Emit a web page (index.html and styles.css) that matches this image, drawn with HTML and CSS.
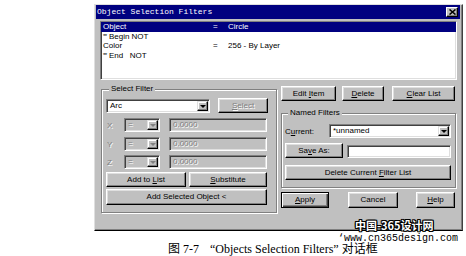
FILE: index.html
```html
<!DOCTYPE html>
<html lang="zh">
<head>
    <meta charset="UTF-8">
    <meta name="viewport" content="width=device-width, initial-scale=1.0">
    <title>Object Selection Filters</title>
    <link rel="stylesheet" href="styles.css">
</head>
<body>
    <div class="dialog">
        <div class="titlebar">
            <span class="title">Object Selection Filters</span>
            <span class="close-btn">
                <svg width="7" height="6" viewBox="0 0 7 6"><path d="M0.5 0.5 L6.5 5.5 M6.5 0.5 L0.5 5.5" stroke="#000" stroke-width="1.6"/></svg>
            </span>
        </div>

        <div class="dialog-body">
            <!-- current filter list -->
            <div class="filter-list">
                <div class="row selected"><span class="col-name">Object</span><span class="col-eq">=</span><span class="col-val">Circle</span></div>
                <div class="row"><span class="col-name"><span class="mark">**</span> Begin NOT</span></div>
                <div class="row"><span class="col-name">Color</span><span class="col-eq">=</span><span class="col-val">256 - By Layer</span></div>
                <div class="row"><span class="col-name"><span class="mark">**</span> End   NOT</span></div>
            </div>

            <div class="panels">
                <div class="group select-filter">
                    <span class="legend">Select Filter</span>
                    <div class="line first">
                        <div class="combo arc-combo"><span class="combo-text">Arc</span><span class="combo-arrow"></span></div>
                        <button class="btn select-btn" disabled><u>S</u>elect</button>
                    </div>
                    <div class="line coord">
                        <span class="axis">X</span>
                        <div class="combo small-combo disabled"><span class="combo-text">=</span><span class="combo-arrow"></span></div>
                        <div class="edit value-edit disabled">0.0000</div>
                    </div>
                    <div class="line coord">
                        <span class="axis">Y</span>
                        <div class="combo small-combo disabled"><span class="combo-text">=</span><span class="combo-arrow"></span></div>
                        <div class="edit value-edit disabled">0.0000</div>
                    </div>
                    <div class="line coord last">
                        <span class="axis">Z</span>
                        <div class="combo small-combo disabled"><span class="combo-text">=</span><span class="combo-arrow"></span></div>
                        <div class="edit value-edit disabled">0.0000</div>
                    </div>
                    <div class="line add-row">
                        <button class="btn add-btn">Add to <u>L</u>ist</button>
                        <button class="btn sub-btn"><u>S</u>ubstitute</button>
                    </div>
                    <button class="btn add-selected">Add Selected Object &lt;</button>
                </div>

                <div class="right-col">
                    <div class="line top-buttons">
                        <button class="btn edit-btn">Edit <u>I</u>tem</button>
                        <button class="btn delete-btn"><u>D</u>elete</button>
                        <button class="btn clear-btn"><u>C</u>lear List</button>
                    </div>

                    <div class="group named-filters">
                        <span class="legend">Named Filters</span>
                        <div class="line current-row">
                            <span class="field-label">C<u>u</u>rrent:</span>
                            <div class="combo current-combo"><span class="combo-text">*unnamed</span><span class="combo-arrow"></span></div>
                        </div>
                        <div class="line save-row">
                            <button class="btn save-btn">Sa<u>v</u>e As:</button>
                            <div class="edit save-edit"></div>
                        </div>
                        <button class="btn delete-list">Delete Current <u>F</u>ilter List</button>
                    </div>

                    <div class="line bottom-buttons">
                        <button class="btn default apply-btn"><u>A</u>pply</button>
                        <button class="btn cancel-btn">Cancel</button>
                        <button class="btn help-btn"><u>H</u>elp</button>
                    </div>
                </div>
            </div>
        </div>
    </div>

    <p class="caption"><span class="fig-no">图 7-7</span><span class="fig-title">“Objects Selection Filters” 对话框</span></p>

    <div class="watermark">
        <div class="wm-name">中国-365设计网</div>
        <div class="wm-url">‘www.cn365design.com</div>
    </div>
</body>
</html>
```

FILE: styles.css
```css
body {
    margin: 0;
    width: 466px;
    height: 256px;
    overflow: hidden;
    position: relative;
    background-color: #fff;
    font-family: "Liberation Sans", Arial, sans-serif;
    font-size: 8px;
    color: #000;
}
.dialog {
    box-sizing: border-box;
    width: 369px;
    height: 227px;
    margin: 4px 0 0 94px;
    padding: 0 2px 0 1px;
    background-color: #c0c0c0;
    border: 1px solid;
    border-color: #dfdfdf #404040 #000 #dfdfdf;
    box-shadow: inset -1px -1px 0 #808080;
}
.titlebar {
    display: flex;
    align-items: center;
    justify-content: space-between;
    height: 14px;
    padding: 0 2px 0 1px;
    background-color: #000080;
    color: #fff;
}
.title {
    font-family: "Liberation Mono", monospace;
    font-size: 8px;
    line-height: 14px;
}
.close-btn {
    box-sizing: border-box;
    display: flex;
    align-items: center;
    justify-content: center;
    width: 12px;
    height: 10px;
    background-color: #c0c0c0;
    border: 1px solid;
    border-color: #fff #000 #000 #fff;
    box-shadow: inset -1px -1px 0 #808080;
}
.dialog-body {
    padding: 2px 3px 0 4px;
}

/* list */
.filter-list {
    box-sizing: border-box;
    height: 59px;
    background-color: #fff;
    border: 1px solid;
    border-color: #808080 #fff #fff #808080;
    box-shadow: inset 1px 1px 0 #404040, inset -1px -1px 0 #dfdfdf;
}
.row {
    display: flex;
    height: 9.5px;
    line-height: 9.5px;
    padding-left: 2px;
    white-space: pre;
}
.row.selected {
    background-color: #000080;
    color: #fff;
}
.col-name {
    width: 110px;
}
.col-eq {
    width: 15px;
}
.mark {
    font-size: 6px;
    line-height: 6px;
    vertical-align: 1px;
    letter-spacing: -0.5px;
}

/* panels */
.panels {
    display: flex;
    align-items: flex-start;
    gap: 4px;
}
.group {
    box-sizing: border-box;
    border: 1px solid #808080;
    box-shadow: inset 1px 1px 0 #fff, 1px 1px 0 #fff;
}
.legend {
    display: table;
    margin: -6px 0 0 3px;
    padding: 0 2px;
    line-height: 10px;
    background-color: #c0c0c0;
}
.line {
    display: flex;
    align-items: flex-end;
}
.select-filter {
    width: 176px;
    margin: 9px 0 0 1px;
    padding: 0 4px 7px 4px;
}
.select-filter .first {
    margin-top: 4px;
    gap: 8px;
}
.coord {
    margin-top: 5px;
    align-items: center;
}
.coord.last {
    margin-top: 4px;
}
.axis {
    width: 18px;
    padding-left: 1px;
    box-sizing: border-box;
    color: #808080;
    text-shadow: 1px 1px 0 #fff;
}
.add-row {
    margin-top: 3px;
    gap: 3px;
}

/* controls */
.btn {
    box-sizing: border-box;
    height: 15px;
    padding: 0;
    font: inherit;
    line-height: 12px;
    color: #000;
    background-color: #c0c0c0;
    border: 1px solid;
    border-color: #fff #000 #000 #fff;
    box-shadow: inset -1px -1px 0 #808080, inset 1px 1px 0 #dfdfdf;
    text-align: center;
    white-space: nowrap;
}
.btn:disabled {
    color: #808080;
    text-shadow: 1px 1px 0 #fff;
}
.btn.default {
    border-color: #000;
    box-shadow: inset 1px 1px 0 #fff, inset -1px -1px 0 #404040, inset -2px -2px 0 #808080;
}
.combo,
.edit {
    box-sizing: border-box;
    height: 14px;
    background-color: #fff;
    border: 1px solid;
    border-color: #808080 #fff #fff #808080;
    box-shadow: inset 1px 1px 0 #404040, inset -1px -1px 0 #dfdfdf;
}
.combo {
    display: flex;
    padding: 1px;
}
.combo-text {
    flex: 1;
    padding-left: 2px;
    line-height: 10px;
}
.combo-arrow {
    box-sizing: border-box;
    display: flex;
    align-items: center;
    justify-content: center;
    width: 11px;
    height: 10px;
    background-color: #c0c0c0;
    border: 1px solid;
    border-color: #dfdfdf #000 #000 #dfdfdf;
    box-shadow: inset -1px -1px 0 #808080, inset 1px 1px 0 #fff;
}
.combo-arrow::after {
    content: "";
    border-left: 3px solid transparent;
    border-right: 3px solid transparent;
    border-top: 3px solid #000;
}
.combo.disabled,
.edit.disabled {
    background-color: #c0c0c0;
    color: #808080;
    text-shadow: 1px 1px 0 #fff;
}
.combo.disabled .combo-arrow::after {
    border-top-color: #808080;
}
.edit {
    padding-left: 3px;
    line-height: 12px;
}
.arc-combo {
    width: 104px;
}
.select-btn {
    width: 50px;
}
.small-combo {
    width: 36px;
    margin-right: 9px;
}
.value-edit {
    width: 98px;
}
.add-btn {
    width: 80px;
}
.sub-btn {
    width: 78px;
}
.add-selected {
    display: block;
    width: 161px;
    height: 16px;
    margin-top: 2px;
}

/* right column */
.right-col {
    width: 175px;
}
.top-buttons {
    margin-top: 6px;
}
.edit-btn {
    width: 55px;
}
.delete-btn {
    width: 42px;
    margin-left: 6px;
}
.clear-btn {
    width: 63px;
    margin-left: 8px;
}
.named-filters {
    margin-top: 12px;
    padding: 0 4px 7px 3px;
}
.current-row {
    margin-top: 6px;
    align-items: center;
}
.field-label {
    width: 44px;
}
.current-combo {
    width: 122px;
}
.save-row {
    margin-top: 5px;
    gap: 4px;
}
.save-btn {
    width: 58px;
}
.save-edit {
    width: 104px;
    height: 13px;
}
.delete-list {
    display: block;
    width: 166px;
    margin-top: 7px;
}
.bottom-buttons {
    margin-top: 4px;
}
.bottom-buttons .btn {
    height: 16px;
}
.apply-btn {
    width: 48px;
}
.cancel-btn {
    width: 50px;
    margin-left: 19px;
}
.help-btn {
    width: 39px;
    margin-left: 18px;
}

/* caption under the figure */
.caption {
    margin: 12px 0 0 168px;
    font-family: "Liberation Serif", "Noto Sans CJK SC", serif;
    font-size: 12px;
    line-height: 12px;
    white-space: nowrap;
}
.fig-title {
    margin-left: 11px;
}

/* site watermark */
.watermark {
    position: absolute;
    left: 338px;
    top: 218px;
}
.wm-name {
    padding-left: 17px;
    font-family: "Noto Sans CJK SC", sans-serif;
    font-weight: bold;
    font-size: 11px;
    line-height: 15px;
    color: #fff;
    text-shadow: -1px 0 #000, 1px 0 #000, 0 -1px #000, 0 1px #000,
        -1px -1px #000, 1px 1px #000, -1px 1px #000, 1px -1px #000;
}
.wm-url {
    font-family: "Liberation Mono", monospace;
    font-size: 10px;
    line-height: 12px;
}
```
